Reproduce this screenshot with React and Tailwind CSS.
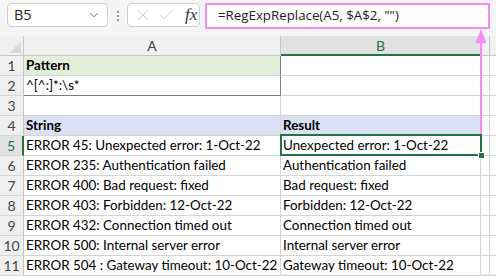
import React from 'react';
import { ChevronDown, X, Check } from 'lucide-react';

const rows = [
  { a: 'Pattern', b: '', bold: true, bg: 'bg-[#e2efda]', bgB: '' },
  { a: '^[^:]*:\\s*', b: '' },
  { a: '', b: '' },
  { a: 'String', b: 'Result', bold: true, bg: 'bg-[#d9e1f2]', bgB: 'bg-[#d9e1f2]' },
  { a: 'ERROR 45: Unexpected error: 1-Oct-22', b: 'Unexpected error: 1-Oct-22' },
  { a: 'ERROR 235: Authentication failed', b: 'Authentication failed' },
  { a: 'ERROR 400: Bad request: fixed', b: 'Bad request: fixed' },
  { a: 'ERROR 403: Forbidden: 12-Oct-22', b: 'Forbidden: 12-Oct-22' },
  { a: 'ERROR 432: Connection timed out', b: 'Connection timed out' },
  { a: 'ERROR 500: Internal server error', b: 'Internal server error' },
  { a: 'ERROR 504 : Gateway timeout: 10-Oct-22', b: 'Gateway timeout: 10-Oct-22' },
];

function Toolbar() {
  return (
    <div className="flex h-[36px] items-start bg-[#f5f5f5]">
      {/* Name box */}
      <div className="ml-[7px] mt-[3px] flex h-[24px] w-[101px] items-center justify-between rounded-[4px] border border-[#d1d1d1] bg-white pl-[6px] pr-[6px]">
        <span className="text-[14.5px] text-[#222]" style={{ fontFamily: '"Open Sans", sans-serif' }}>B5</span>
        <ChevronDown className="h-[14px] w-[14px] text-[#555]" strokeWidth={1.5} />
      </div>
      {/* Dots */}
      <div className="ml-[9px] mt-[11px] flex flex-col gap-[2px]">
        <span className="h-[2px] w-[2px] bg-[#999]" />
        <span className="h-[2px] w-[2px] bg-[#999]" />
        <span className="h-[2px] w-[2px] bg-[#999]" />
      </div>
      {/* Cancel / Enter / fx */}
      <div className="ml-[8px] mt-[3px] flex h-[24px] w-[73px] items-center gap-[5px] rounded-[4px] border border-[#d1d1d1] bg-white pl-[6px]">
        <X className="h-[18px] w-[18px] text-[#c4c4c4]" strokeWidth={1.1} />
        <Check className="h-[18px] w-[18px] text-[#c4c4c4]" strokeWidth={1.1} />
        <span className="ml-[5px] text-[17px] italic text-[#333]" style={{ fontFamily: '"Liberation Serif", serif' }}>
          fx
        </span>
      </div>
      {/* Formula bar */}
      <div className="ml-[5px] mt-[3px] flex h-[26px] w-[285px] items-center border-2 border-[#f58cf5] bg-white pl-[11px]">
        <span className="text-[13.3px] text-[#222]" style={{ fontFamily: '"Open Sans", sans-serif' }}>
          =RegExpReplace(A5, $A$2, "")
        </span>
      </div>
    </div>
  );
}

function HeaderRow() {
  return (
    <div className="flex h-[20px]">
      <div className="relative w-[24px] border-r border-b border-[#c6c6c6] bg-[#f0f0f0]">
        <svg className="absolute bottom-[2px] right-[2px]" width="12" height="12" viewBox="0 0 12 12">
          <path d="M12 0 L12 12 L0 12 Z" fill="#dadada" />
        </svg>
      </div>
      <div className="flex w-[257px] items-center justify-center border-r border-b border-[#c6c6c6] bg-[#f0f0f0] text-[14px] text-[#444]">
        A
      </div>
      <div className="flex w-[200px] items-center justify-center border-r border-[#c6c6c6] border-b-2 border-b-[#217346] bg-[#e1e1e1] text-[14px] text-[#217346]">
        B
      </div>
      <div className="w-[9px] border-r border-b border-[#c6c6c6] bg-[#f0f0f0]" />
      <div className="flex-1 border-b border-[#c6c6c6] bg-[#f0f0f0]" />
    </div>
  );
}

export default function App() {
  return (
    <div className="relative h-[276px] w-[496px] overflow-hidden bg-white" style={{ fontFamily: 'Lato, "Liberation Sans", sans-serif' }}>
      <Toolbar />
      <HeaderRow />
      {rows.map((r, i) => {
        const n = i + 1;
        const sel = n === 5;
        const boxed = n === 1 || n === 2;
        return (
          <div key={n} className="flex h-[20px]">
            <div
              className={`flex w-[24px] items-center justify-center border-b border-[#d4d4d4] text-[14px] ${
                sel ? 'border-r-2 border-r-[#217346] bg-[#e1e1e1] text-[#217346]' : 'border-r border-r-[#c6c6c6] bg-[#f0f0f0] text-[#444]'
              }`}
            >
              {n}
            </div>
            <div
              className={`flex w-[257px] items-center overflow-hidden whitespace-nowrap pl-[2px] text-[13.4px] text-black ${r.bg || ''} ${
                r.bold ? 'font-bold' : ''
              } ${boxed ? 'border-r border-r-[#7f7f7f]' : 'border-r border-r-[#d4d4d4]'} ${
                n === 2 ? 'border-b border-b-[#7f7f7f]' : 'border-b border-b-[#d4d4d4]'
              }`}
            >
              {r.a}
            </div>
            <div
              className={`flex w-[200px] items-center whitespace-nowrap border-r border-b border-[#d4d4d4] pl-[2px] text-[13.4px] text-black ${r.bgB || ''} ${
                r.bold ? 'font-bold' : ''
              }`}
            >
              {r.b}
            </div>
            <div className="w-[9px] border-r border-b border-[#d4d4d4]" />
            <div className="flex-1 border-b border-[#d4d4d4]" />
          </div>
        );
      })}

      {/* Selection on B5 */}
      <div className="absolute left-[280px] top-[134px] h-[22px] w-[202px] border-2 border-[#217346]" />
      <div className="absolute left-[478px] top-[152px] h-[7px] w-[7px] border border-white bg-[#217346]" />

      {/* Pink arrow from formula bar to the result column */}
      <svg className="absolute left-[470px] top-[28px]" width="22" height="108" viewBox="0 0 22 108">
        <path d="M11 1 L5.5 15 L16.5 15 Z" fill="#f58cf5" />
        <rect x="10" y="14" width="2" height="92" fill="#f58cf5" />
      </svg>
    </div>
  );
}
